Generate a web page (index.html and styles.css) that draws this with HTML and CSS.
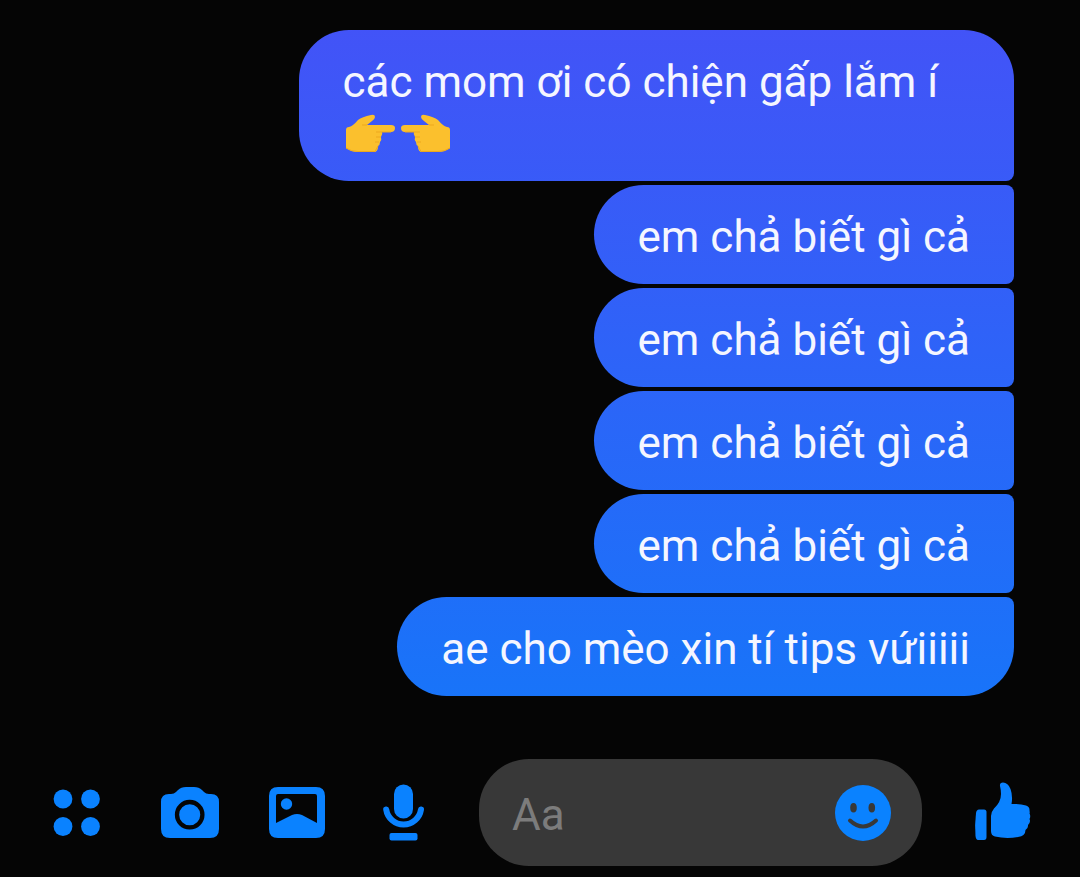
FILE: index.html
```
<!DOCTYPE html>
<html lang="vi">
<head>
    <meta charset="UTF-8">
    <meta name="viewport" content="width=device-width, initial-scale=1.0">
    <title>Tin nhắn</title>
    <link rel="stylesheet" href="styles.css">
</head>
<body>
    <main class="messages">
        <div class="message">các mom ơi có chiện gấp lắm í
            <svg class="emoji" viewBox="0 0 55 52" role="img" aria-label="👉">
                <use href="#hand"/>
            </svg><svg class="emoji emoji-left" viewBox="0 0 55 52" role="img" aria-label="👈">
                <g id="hand">
                    <path fill="#fbc02d" d="M3 22Q3 19 6 19Q10 18 15 12Q19 9 28 7Q32 6 32 9Q32 11 29 13L24 17H48Q52 17 52 20Q52 24 48 24H39Q40 26 38 29Q39 32 37 34Q37 37 35 38Q35 44 31 44H15Q8 44 3 40Z"/>
                    <path fill="none" stroke="#eda81e" stroke-width="1" d="M24 17H19M48 24H33M38 29H33M36 34H32M35 38L32 43.500H15Q8 43.500 3 40"/>
                </g>
            </svg>
        </div>
        <div class="message">em chả biết gì cả</div>
        <div class="message">em chả biết gì cả</div>
        <div class="message">em chả biết gì cả</div>
        <div class="message">em chả biết gì cả</div>
        <div class="message">ae cho mèo xin tí tips vứiiiii</div>
    </main>

    <form class="composer">
        <div class="tools">
            <button type="button" class="icon-btn" aria-label="Thêm">
                <svg viewBox="0 0 60 60">
                    <circle cx="11" cy="17" r="9.400"/>
                    <circle cx="38.500" cy="17" r="9.400"/>
                    <circle cx="11" cy="44.500" r="9.400"/>
                    <circle cx="38.500" cy="44.500" r="9.400"/>
                </svg>
            </button>
            <button type="button" class="icon-btn" aria-label="Máy ảnh">
                <svg viewBox="0 0 60 60">
                    <path d="M9 12H11Q14 12 16 10L18 8Q21 5 26 5H34Q39 5 42 8L44 10Q46 12 49 12H51Q59 12 59 20V47Q59 56 50 56H10Q1 56 1 47V20Q1 12 9 12Z"/>
                    <circle class="cutout" cx="29.700" cy="32.700" r="12.700" stroke-width="4.300"/>
                </svg>
            </button>
            <button type="button" class="icon-btn" aria-label="Ảnh">
                <svg viewBox="0 0 60 60">
                    <path fill-rule="evenodd" d="M10 5H48Q57 5 57 14V47Q57 56 48 56H10Q1 56 1 47V14Q1 5 10 5ZM10 12Q8 12 8 14V41L24 33Q29 31 34 33L49 41V14Q49 12 47 12Z"/>
                    <circle cx="18.500" cy="22" r="5.700"/>
                </svg>
            </button>
            <button type="button" class="icon-btn" aria-label="Ghi âm">
                <svg viewBox="0 0 60 60">
                    <rect x="18" y="2.500" width="19" height="34" rx="9.500"/>
                    <path class="line" stroke-width="6" stroke-linecap="round" d="M10.200 27.500A17.600 17.600 0 0 0 45 27.500"/>
                    <rect x="13.500" y="51" width="28" height="7.500" rx="2"/>
                </svg>
            </button>
        </div>
        <div class="field">
            <input type="text" class="field-input" placeholder="Aa" aria-label="Tin nhắn">
            <button type="button" class="emoji-btn" aria-label="Biểu tượng cảm xúc">
                <svg viewBox="0 0 56 56">
                    <circle cx="28" cy="28" r="28"/>
                    <ellipse class="face" cx="18.500" cy="22.700" rx="3.300" ry="4.700"/>
                    <ellipse class="face" cx="36.800" cy="22.700" rx="3.300" ry="4.700"/>
                    <path class="smile" d="M15 35.500Q28 47.500 41 35.500"/>
                </svg>
            </button>
        </div>
        <button type="button" class="icon-btn" aria-label="Thích">
            <svg viewBox="0 0 60 60">
                <path d="M7 27.500H12Q14.500 27.500 14.500 30V55Q14.500 58 12 58H6Q4 58 3.500 54Q2.500 43 4 31Q4.500 27.500 7 27.500Z"/>
                <path d="M28 4Q27.500 .5 31 .5Q36 .5 38.500 7Q41 14 39.500 22Q48 21.500 54 23.500Q58 25 57.500 29Q58 30 57.500 31.500Q59 34 57.500 37Q59 40 56 43Q56.500 46 53.500 48Q53.500 54 46 55Q34 57 23 54.500Q19 53.500 19 49V34Q19 30 22 26.500Q29 20 29 12Q29 8 28 4Z"/>
            </svg>
        </button>
    </form>
</body>
</html>
```

FILE: styles.css
```
* {
    box-sizing: border-box;
}

body {
    margin: 0;
    background-color: #050505;
    color: #f5f6ff;
    font-family: Roboto, sans-serif;
    font-size: 44px;
}

.messages {
    display: flex;
    flex-direction: column;
    align-items: flex-end;
    gap: 4px;
    padding: 30px 66px 0 60px;
}

/* the gradient is shared by all bubbles, so it is tied to the window */
.message {
    max-width: 75%;
    padding: 26px 44px 21px;
    border-radius: 50px 8px 8px 50px;
    background: linear-gradient(#4452f7, #1874f9 80%) fixed;
    line-height: 52px;
}

.message:first-child {
    border-top-right-radius: 50px;
}

.message:last-child {
    border-bottom-right-radius: 50px;
}

.emoji {
    width: 55px;
    height: 52px;
    vertical-align: top;
}

.emoji-left {
    transform: scaleX(-1);
}

.composer {
    display: flex;
    align-items: center;
    margin-top: 63px;
    padding: 0 48px 11px 52px;
}

.tools {
    display: flex;
    gap: 48px;
}

button {
    flex: none;
    padding: 0;
    border: none;
    background: none;
    cursor: pointer;
}

svg {
    fill: #0a82ff;
}

button svg {
    display: block;
    width: 100%;
}

.icon-btn {
    width: 60px;
    padding-bottom: 2px;
}

.cutout {
    fill: none;
    stroke: #050505;
}

.line {
    fill: none;
    stroke: #0a82ff;
}

.field {
    display: flex;
    flex: 1;
    align-items: center;
    min-width: 0;
    height: 107px;
    margin: 0 50px 0 43px;
    padding: 0 31px 0 33px;
    border-radius: 50px;
    background-color: #383838;
}

.field-input {
    flex: 1;
    min-width: 0;
    padding: 4px 0 0;
    border: none;
    outline: none;
    background: none;
    color: #f5f6ff;
    font: inherit;
}

.field-input::placeholder {
    color: #7c7c7c;
}

.emoji-btn {
    width: 56px;
}

.face {
    fill: #383838;
}

.smile {
    fill: none;
    stroke: #383838;
    stroke-width: 4;
    stroke-linecap: round;
}
```
